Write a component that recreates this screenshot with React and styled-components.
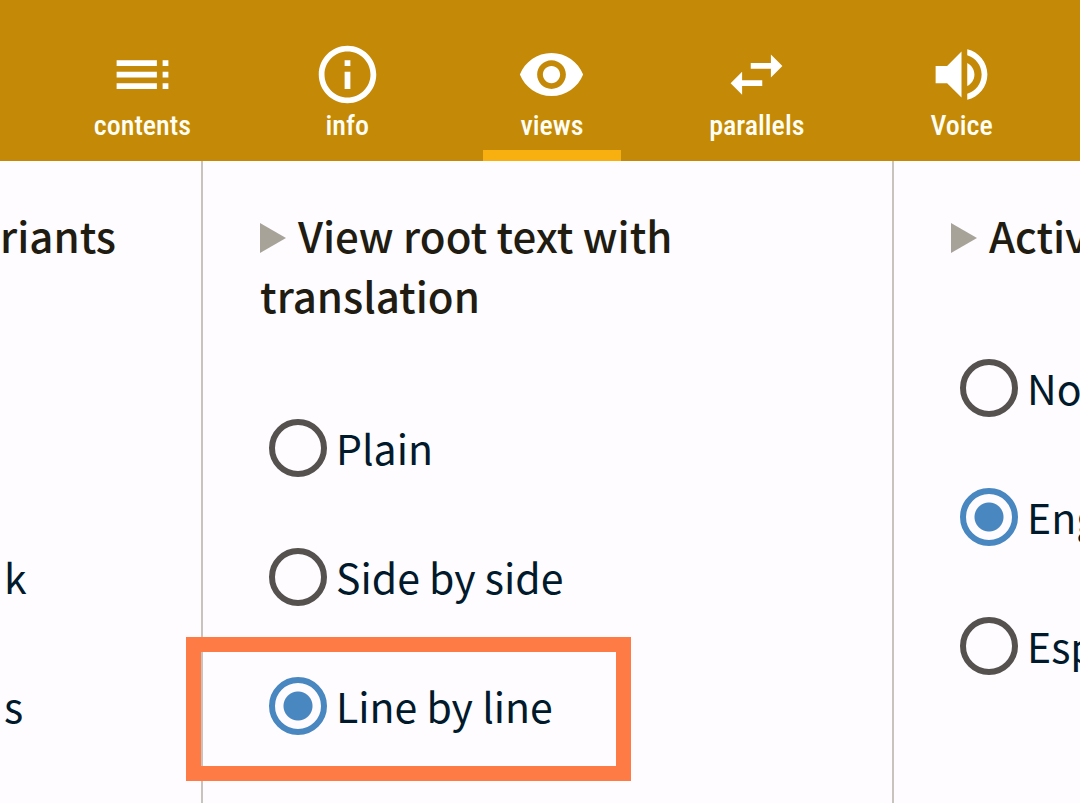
import React, { useState } from "react";
import styled, { createGlobalStyle } from "styled-components";

const GlobalStyle = createGlobalStyle`
  *, *::before, *::after { box-sizing: border-box; }
  body {
    margin: 0;
    background: #fffcff;
    font-family: "Noto Sans CJK SC", "Noto Sans", sans-serif;
  }
`;

const Page = styled.div`
  display: flex;
  flex-direction: column;
  min-height: 100vh;
  overflow: hidden;
`;

const Toolbar = styled.nav`
  display: flex;
  justify-content: space-around;
  height: 161px;
  padding: 40px 16px 0 40px;
  background: #c48a07;
`;

const NavButton = styled.button`
  display: flex;
  flex-direction: column;
  align-items: center;
  width: 138px;
  padding: 0;
  border: 0;
  border-bottom: 11px solid ${(p) => (p.$active ? "#f7b010" : "transparent")};
  background: none;
  color: #fffef4;
  font-family: "Roboto Condensed", "Noto Sans CJK SC", sans-serif;
  font-size: 28px;
  font-weight: 500;
  line-height: 34px;
  cursor: pointer;
`;

const Icon = styled.svg`
  width: 69px;
  height: 69px;
  flex: none;
  fill: #ffffff;
`;

const Columns = styled.main`
  flex: 1;
  display: grid;
  grid-template-columns: minmax(0, 201fr) minmax(0, 691fr) minmax(0, 188fr);
`;

const Column = styled.section`
  padding: 44px 0 0 ${(p) => (p.$edge ? "0" : "57px")};
  border-left: ${(p) => (p.$edge ? "0" : "2px solid #c8c3bd")};
  white-space: ${(p) => (p.$clip ? "nowrap" : "normal")};
  overflow: ${(p) => (p.$clip ? "hidden" : "visible")};
`;

const Heading = styled.h2`
  margin: 0;
  color: #211c12;
  font-size: 42px;
  font-weight: 500;
  line-height: 60px;
`;

const Marker = styled.svg`
  width: 26px;
  height: 30px;
  margin-right: 12px;
  fill: #a7a399;
`;

const Options = styled.div`
  display: flex;
  flex-direction: column;
  gap: 71px;
  padding: ${(p) => (p.$late ? "283px 0 0 4px" : "94px 0 0 9px")};
`;

const Option = styled.label`
  position: relative;
  display: flex;
  align-items: flex-start;
  gap: 9px;
  align-self: flex-start;
  height: 58px;
  color: #001a2c;
  font-size: 41px;
  line-height: 57px;
  cursor: pointer;
`;

const Radio = styled.input`
  appearance: none;
  flex: none;
  width: 58px;
  height: 58px;
  margin: 0;
  border: 6px solid #55514e;
  border-radius: 50%;

  &:checked {
    border-color: #4987c1;
    background: radial-gradient(circle, #4987c1 14px, transparent 15px);
  }
`;

const Highlight = styled.span`
  position: absolute;
  top: -40px;
  left: -83px;
  width: 445px;
  height: 144px;
  border: 15px solid #ff7b45;
  pointer-events: none;
`;

const tabs = [
  {
    label: "contents",
    path: "M3 9h14V7H3v2zm0 4h14v-2H3v2zm0 4h14v-2H3v2zm16 0h2v-2h-2v2zm0-10v2h2V7h-2zm0 6h2v-2h-2v2z",
  },
  {
    label: "info",
    path: "M11 7h2v2h-2zm0 4h2v6h-2zm1-9C6.48 2 2 6.48 2 12s4.48 10 10 10 10-4.48 10-10S17.52 2 12 2zm0 18c-4.41 0-8-3.59-8-8s3.59-8 8-8 8 3.59 8 8-3.59 8-8 8z",
  },
  {
    label: "views",
    path: "M12 4.5C7 4.5 2.73 7.61 1 12c1.73 4.39 6 7.5 11 7.5s9.27-3.11 11-7.5c-1.73-4.39-6-7.5-11-7.5zM12 17c-2.76 0-5-2.24-5-5s2.24-5 5-5 5 2.24 5 5-2.24 5-5 5zm0-8c-1.66 0-3 1.34-3 3s1.34 3 3 3 3-1.34 3-3-1.34-3-3-3z",
  },
  {
    label: "parallels",
    path: "M6.99 11L3 15l3.99 4v-3H14v-2H6.99v-3zM21 9l-3.99-4v3H10v2h7.01v3L21 9z",
  },
  {
    label: "Voice",
    path: "M3 9v6h4l5 5V4L7 9H3zm13.5 3c0-1.77-1.02-3.29-2.5-4.03v8.05c1.48-.73 2.5-2.25 2.5-4.02zM14 3.23v2.06c2.89.86 5 3.54 5 6.71s-2.11 5.85-5 6.71v2.06c4.01-.91 7-4.49 7-8.77s-2.99-7.86-7-8.77z",
  },
];

function Triangle() {
  return (
    <Marker viewBox="0 0 26 30" aria-hidden="true">
      <path d="M0 0L26 15L0 30z" />
    </Marker>
  );
}

function RadioGroup({ name, items, initial, highlighted }) {
  const [value, setValue] = useState(initial);
  return (
    <Options role="radiogroup">
      {items.map((item) => (
        <Option key={item}>
          <Radio
            type="radio"
            name={name}
            checked={value === item}
            onChange={() => setValue(item)}
          />
          {item}
          {highlighted === item && <Highlight />}
        </Option>
      ))}
    </Options>
  );
}

export default function App() {
  const [active, setActive] = useState("views");
  return (
    <Page>
      <GlobalStyle />
      <Toolbar>
        {tabs.map((tab) => (
          <NavButton
            key={tab.label}
            type="button"
            $active={active === tab.label}
            onClick={() => setActive(tab.label)}
          >
            <Icon viewBox="0 0 24 24" aria-hidden="true">
              <path d={tab.path} />
            </Icon>
            {tab.label}
          </NavButton>
        ))}
      </Toolbar>
      <Columns>
        <Column $edge $clip>
          <Heading>riants</Heading>
          <Options $late>
            <Option as="span">k</Option>
            <Option as="span">s</Option>
          </Options>
        </Column>
        <Column>
          <Heading>
            <Triangle />
            View root text with translation
          </Heading>
          <RadioGroup
            name="view"
            items={["Plain", "Side by side", "Line by line"]}
            initial="Line by line"
            highlighted="Line by line"
          />
        </Column>
        <Column $clip>
          <Heading>
            <Triangle />
            Activ
          </Heading>
          <RadioGroup name="lookup" items={["No", "Eng", "Esp"]} initial="Eng" />
        </Column>
      </Columns>
    </Page>
  );
}
